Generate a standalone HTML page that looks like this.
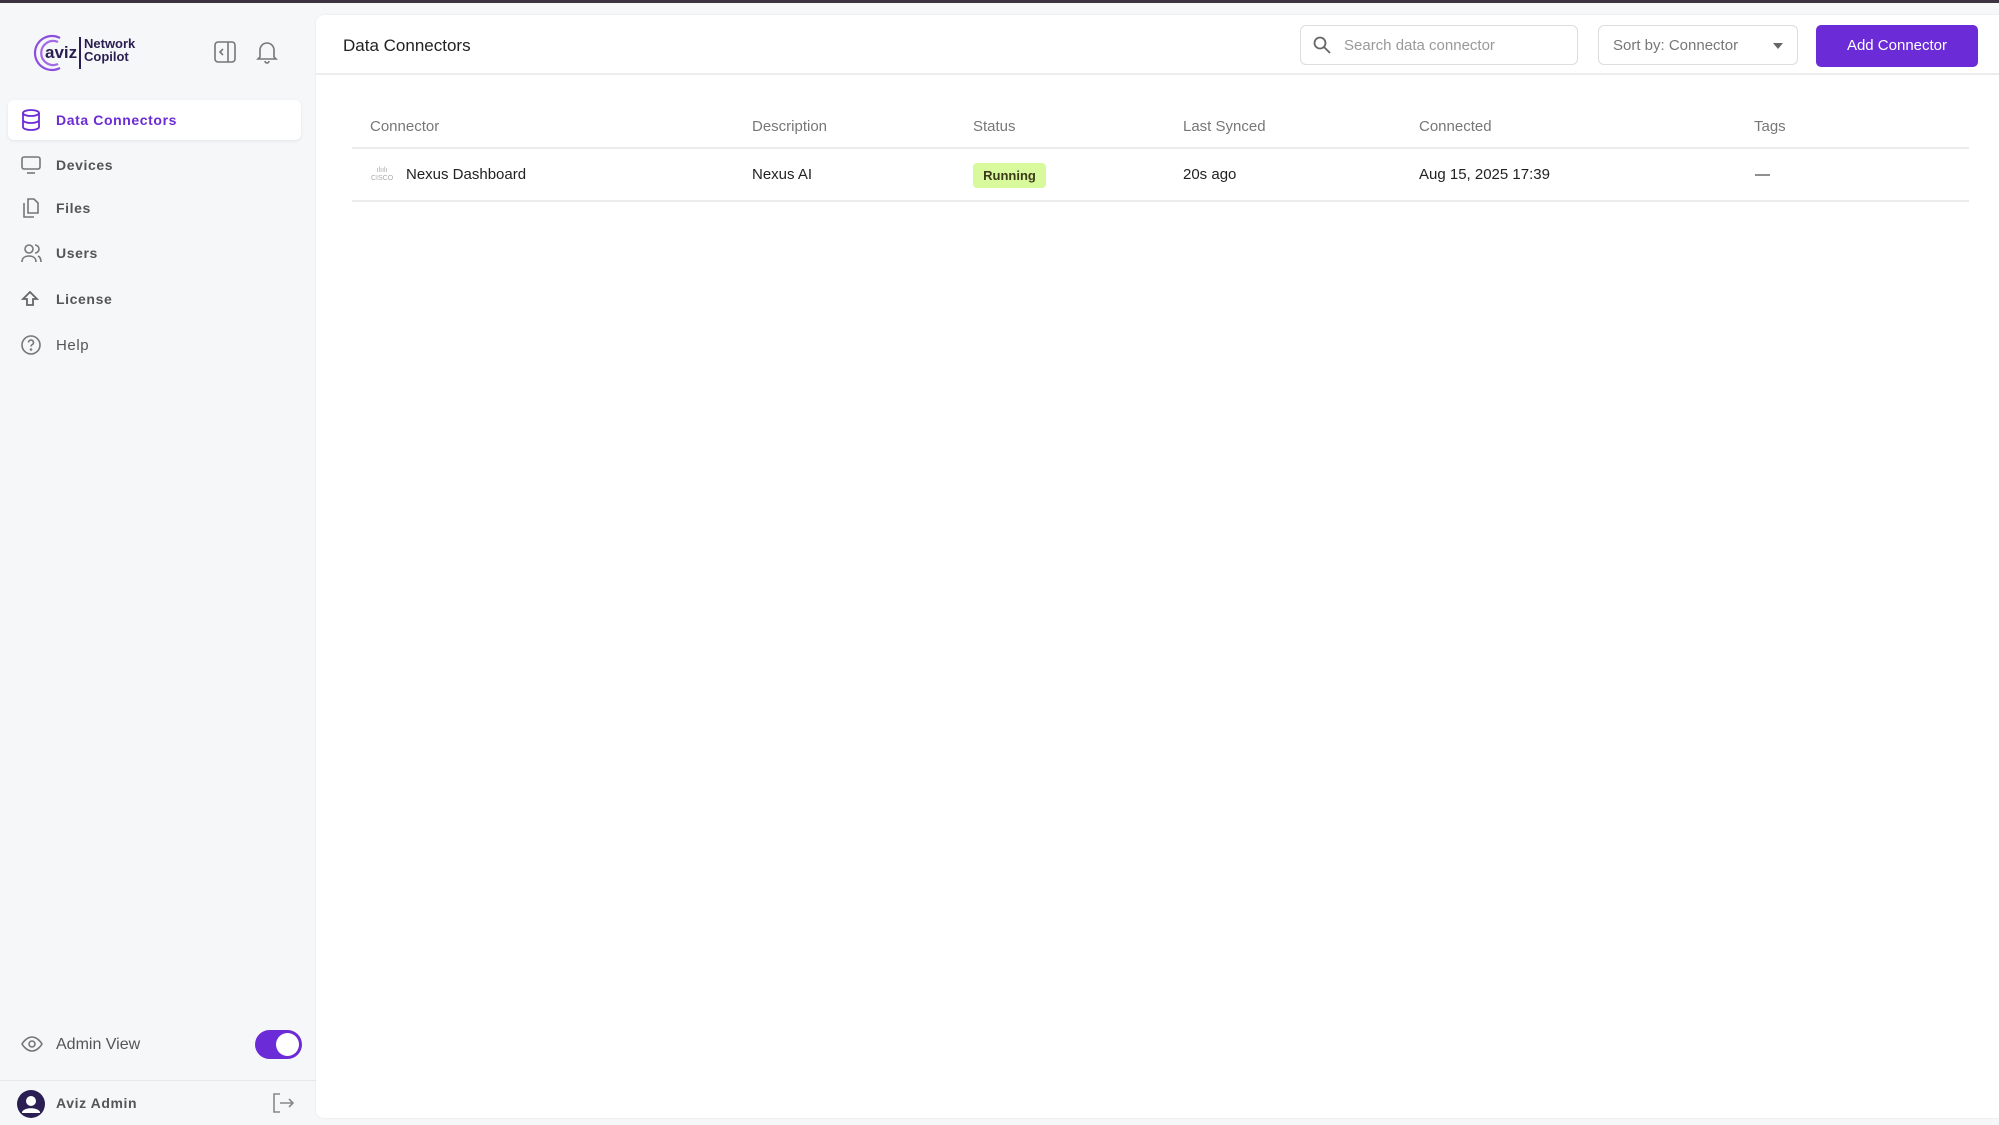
<!DOCTYPE html>
<html><head><meta charset="utf-8"><style>
*{box-sizing:border-box;margin:0;padding:0}
body{width:1999px;height:1125px;background:#f6f7f9;font-family:"Liberation Sans",sans-serif;position:relative;overflow:hidden;color:#222}
.topbar{position:absolute;left:0;top:0;width:1999px;height:3px;background:#3d3340}
.side{position:absolute;left:0;top:3px;width:316px;height:1122px}
.nav{position:absolute;left:8px;width:293px;height:40px;display:flex;align-items:center;font-size:14px;font-weight:bold;letter-spacing:.6px;color:#555}
.nav svg{position:absolute;left:13px}
.nav span{position:absolute;left:48px}
.nav.act{background:#fff;border-radius:6px;box-shadow:0 1px 3px rgba(0,0,0,.08);color:#6b2bd6}
.main{position:absolute;left:316px;top:15px;width:1683px;height:1103px;background:#fff;border-radius:8px 0 0 8px;box-shadow:0 0 2px rgba(0,0,0,.08)}
.hdr{position:absolute;left:0;top:0;width:100%;height:60px;border-bottom:2px solid #ececee}
.th{position:absolute;top:103px;font-size:15px;color:#777}
.td{position:absolute;top:151px;font-size:15px;color:#222}
</style></head><body>
<div class="topbar"></div>
<div class="side">
 <svg style="position:absolute;left:30px;top:29px" width="42" height="42" viewBox="0 0 42 42" fill="none" stroke="#8b4fe0" stroke-width="2.2"><path d="M30 6A17 17 0 1 0 30 36"/><path d="M28 10A12 12 0 1 0 28 32" stroke="#a36ae8"/></svg>
 <div style="position:absolute;left:45px;top:40px;font-weight:bold;font-size:17px;color:#2b1e52">aviz</div>
 <div style="position:absolute;left:79px;top:34px;width:1.5px;height:32px;background:#2b1e52"></div>
 <div style="position:absolute;left:84px;top:34px;font-weight:bold;font-size:13px;line-height:13px;color:#2b1e52">Network<br>Copilot</div>
 <svg style="position:absolute;left:214px;top:38px" width="22" height="22" viewBox="0 0 22 22" fill="none" stroke="#777" stroke-width="1.6"><rect x="1" y="1" width="20" height="20" rx="3"/><path d="M14 1v20M9 8l-3 3 3 3"/></svg>
 <svg style="position:absolute;left:256px;top:37px" width="22" height="24" viewBox="0 0 22 24" fill="none" stroke="#777" stroke-width="1.6"><path d="M4 17V10a7 7 0 0 1 14 0v7l2 2H2z"/><path d="M9 21a2 2 0 0 0 4 0"/></svg>
 <div class="nav act" style="top:97px"><svg width="20" height="22" viewBox="0 0 20 22" fill="none" stroke="#6b2bd6" stroke-width="1.8"><ellipse cx="10" cy="4" rx="8" ry="3"/><path d="M2 4v14c0 1.7 3.6 3 8 3s8-1.3 8-3V4M2 11c0 1.7 3.6 3 8 3s8-1.3 8-3"/></svg><span>Data Connectors</span></div>
 <div class="nav" style="top:142px"><svg width="20" height="20" viewBox="0 0 20 20" fill="none" stroke="#777" stroke-width="1.6"><rect x="1" y="2" width="18" height="12" rx="2"/><path d="M6 18h8"/></svg><span>Devices</span></div>
 <div class="nav" style="top:185px"><svg width="20" height="20" viewBox="0 0 20 20" fill="none" stroke="#777" stroke-width="1.6"><path d="M7 1h6l4 4v10H7z"/><path d="M3 5v14h10"/></svg><span>Files</span></div>
 <div class="nav" style="top:230px"><svg width="22" height="20" viewBox="0 0 22 20" fill="none" stroke="#777" stroke-width="1.6"><circle cx="8" cy="6" r="4"/><path d="M1 19c0-4 3-6 7-6s7 2 7 6M14 2a4 4 0 0 1 0 8M17 13c2 1 3 3 3 6"/></svg><span>Users</span></div>
 <div class="nav" style="top:276px"><svg width="18" height="18" viewBox="0 0 18 18" fill="none" stroke="#666" stroke-width="1.8"><path d="M9 2L2 9h4v6h6V9h4z"/></svg><span>License</span></div>
 <div class="nav" style="top:322px;font-weight:normal;font-size:15px"><svg width="20" height="20" viewBox="0 0 20 20" fill="none" stroke="#777" stroke-width="1.6"><circle cx="10" cy="10" r="9"/><path d="M7.5 7.5a2.5 2.5 0 1 1 3.5 2.3c-.7.4-1 .9-1 1.7"/><circle cx="10" cy="14.5" r=".5"/></svg><span>Help</span></div>
 <svg style="position:absolute;left:21px;top:1033px" width="22" height="16" viewBox="0 0 22 16" fill="none" stroke="#777" stroke-width="1.6"><path d="M1 8s4-7 10-7 10 7 10 7-4 7-10 7S1 8 1 8z"/><circle cx="11" cy="8" r="3"/></svg>
 <div style="position:absolute;left:56px;top:1033px;font-size:16px;color:#555">Admin View</div>
 <div style="position:absolute;left:255px;top:1027px;width:47px;height:29px;border-radius:15px;background:#6b2bd6"><div style="position:absolute;right:3px;top:3px;width:23px;height:23px;border-radius:50%;background:#fff"></div></div>
 <div style="position:absolute;left:0;top:1077px;width:316px;height:1px;background:#e8e8ea"></div>
 <svg style="position:absolute;left:17px;top:1087px" width="28" height="28" viewBox="0 0 28 28"><circle cx="14" cy="14" r="14" fill="#2b1e52"/><circle cx="14" cy="11" r="5" fill="#fff"/><path d="M5 22c2-5 16-5 18 0v1H5z" fill="#fff"/></svg>
 <div style="position:absolute;left:56px;top:1092px;font-size:14px;font-weight:bold;letter-spacing:.6px;color:#555">Aviz Admin</div>
 <svg style="position:absolute;left:272px;top:1090px" width="22" height="20" viewBox="0 0 22 20" fill="none" stroke="#888" stroke-width="1.6"><path d="M8 1H2v18h6M8 10h13M17 6l4 4-4 4"/></svg>
</div>
<div class="main">
 <div class="hdr">
  <div style="position:absolute;left:27px;top:21px;font-size:17px;color:#222">Data Connectors</div>
  <div style="position:absolute;left:984px;top:10px;width:278px;height:40px;border:1px solid #ddd;border-radius:6px"><svg style="position:absolute;left:12px;top:10px" width="18" height="18" viewBox="0 0 18 18" fill="none" stroke="#666" stroke-width="1.8"><circle cx="7" cy="7" r="5.5"/><path d="M11 11l6 6"/></svg><span style="position:absolute;left:43px;top:11px;font-size:15px;color:#999">Search data connector</span></div>
  <div style="position:absolute;left:1282px;top:10px;width:200px;height:40px;border:1px solid #ddd;border-radius:6px"><span style="position:absolute;left:14px;top:11px;font-size:15px;color:#777">Sort by: Connector</span><span style="position:absolute;right:14px;top:17px;border-left:5px solid transparent;border-right:5px solid transparent;border-top:6px solid #666"></span></div>
  <div style="position:absolute;left:1500px;top:10px;width:162px;height:42px;border-radius:5px;background:#6b2bd6;color:#fff;font-size:15px;text-align:center;line-height:42px">Add Connector</div>
 </div>
 <div class="th" style="left:54px">Connector</div>
 <div class="th" style="left:436px">Description</div>
 <div class="th" style="left:657px">Status</div>
 <div class="th" style="left:867px">Last Synced</div>
 <div class="th" style="left:1103px">Connected</div>
 <div class="th" style="left:1438px">Tags</div>
 <div style="position:absolute;left:36px;top:132px;width:1617px;height:2px;background:#ececee"></div>
 <div style="position:absolute;left:55px;top:152px;font-size:7px;color:#aaa;line-height:8px;text-align:center">ılıılı<br>CISCO</div>
 <div class="td" style="left:90px">Nexus Dashboard</div>
 <div class="td" style="left:436px">Nexus AI</div>
 <div style="position:absolute;left:657px;top:148px;width:73px;height:25px;border-radius:4px;background:#d9f99d;font-size:13px;font-weight:bold;text-align:center;line-height:25px;color:#3a3a1a">Running</div>
 <div class="td" style="left:867px">20s ago</div>
 <div class="td" style="left:1103px">Aug 15, 2025 17:39</div>
 <div class="td" style="left:1439px">—</div>
 <div style="position:absolute;left:36px;top:185px;width:1617px;height:2px;background:#ececee"></div>
</div>
</body></html>
